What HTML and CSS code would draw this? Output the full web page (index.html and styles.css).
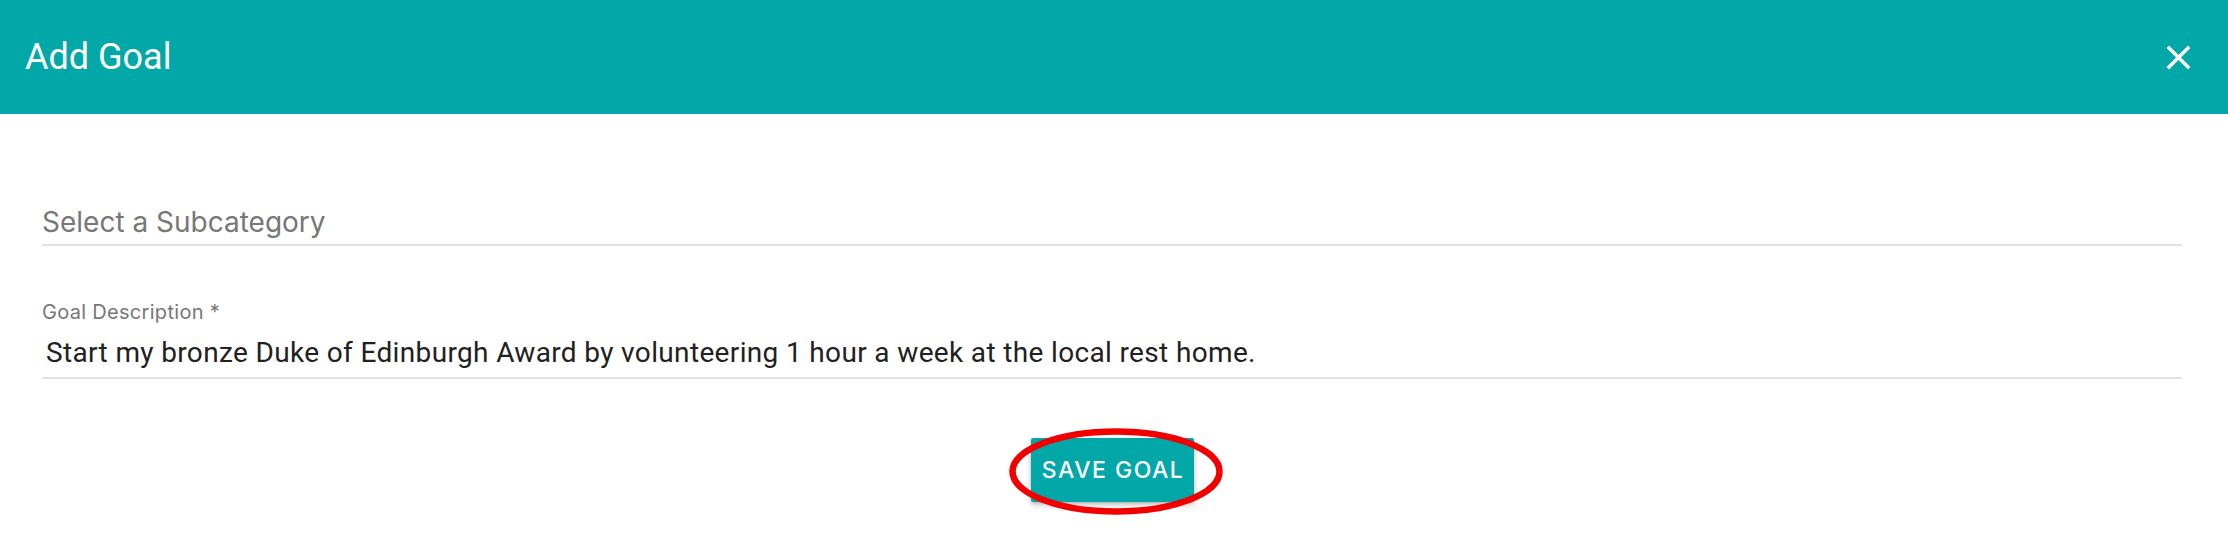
FILE: index.html
```html
<!DOCTYPE html>
<html lang="en">
<head>
<meta charset="utf-8">
<title>Add Goal</title>
<link rel="stylesheet" href="styles.css">
</head>
<body>
<div class="dialog">
  <header class="dialog-header">
    <h1 class="dialog-title">Add Goal</h1>
    <button class="close-btn" aria-label="Close">
      <svg width="41" height="41" viewBox="0 0 24 24"><path fill="#fff" d="M19 6.41L17.59 5 12 10.590 6.41 5 5 6.41 10.59 12 5 17.59 6.41 19 12 13.41 17.59 19 19 17.59 13.41 12z"/></svg>
    </button>
  </header>
  <div class="dialog-body">
    <div class="select-field">Select a Subcategory</div>
    <div class="text-field">
      <label class="field-label">Goal Description *</label>
      <div class="field-input">Start my bronze Duke of Edinburgh Award by volunteering 1 hour a week at the local rest home.</div>
    </div>
    <div class="actions">
      <div class="btn-wrap">
        <button class="save-btn">SAVE GOAL</button>
        <svg class="highlight" width="220" height="93" viewBox="0 0 220 93"><ellipse cx="110" cy="46.5" rx="103.5" ry="40" fill="none" stroke="#f20000" stroke-width="6.5"/></svg>
      </div>
    </div>
  </div>
</div>
</body>
</html>
```
FILE: styles.css
```css
html, body {
  margin: 0;
  padding: 0;
  background: #ffffff;
  font-family: Roboto, "Liberation Sans", Arial, sans-serif;
}
.dialog {
  width: 100%;
  height: 556px;
  background: #fff;
}
.dialog-header {
  height: 114px;
  background: #02a8a8;
  display: flex;
  align-items: center;
  justify-content: space-between;
  padding: 0 29px 0 25px;
  box-sizing: border-box;
}
.dialog-title {
  margin: 0;
  font-size: 36px;
  font-weight: 400;
  color: #fff;
  line-height: 1;
}
.close-btn {
  background: none;
  border: 0;
  padding: 0;
  width: 41px;
  height: 41px;
  display: flex;
  cursor: pointer;
}
.dialog-body {
  padding: 88px 46px 0 42px;
}
.select-field {
  font-family: Inter, Roboto, "Liberation Sans", sans-serif;
  font-size: 28px;
  line-height: 40px;
  color: #777777;
  padding-bottom: 2px;
  border-bottom: 2px solid #e2e2e2;
}
.text-field {
  margin-top: 54px;
  display: flex;
  flex-direction: column;
}
.field-label {
  font-family: Inter, Roboto, "Liberation Sans", sans-serif;
  font-size: 20px;
  line-height: 24px;
  color: #777777;
  letter-spacing: 0.3px;
}
.field-input {
  margin-top: 9px;
  font-size: 28px;
  line-height: 40px;
  letter-spacing: 0.35px;
  color: #212121;
  padding: 0 0 4px 4px;
  border-bottom: 2px solid #e2e2e2;
}
.actions {
  display: flex;
  justify-content: center;
  margin-top: 59px;
}
.btn-wrap {
  position: relative;
}
.save-btn {
  width: 163px;
  height: 64px;
  background: #02a8a8;
  color: #fff;
  border: 0;
  border-radius: 2px;
  font-family: Inter, Roboto, "Liberation Sans", sans-serif;
  font-size: 23px;
  font-weight: 500;
  letter-spacing: 1.5px;
  box-shadow: 0 3px 6px rgba(0,0,0,0.22), 0 1px 3px rgba(0,0,0,0.14);
  padding: 0 0 0 2px;
}
.highlight {
  position: absolute;
  left: -25px;
  top: -13px;
  pointer-events: none;
}
```
